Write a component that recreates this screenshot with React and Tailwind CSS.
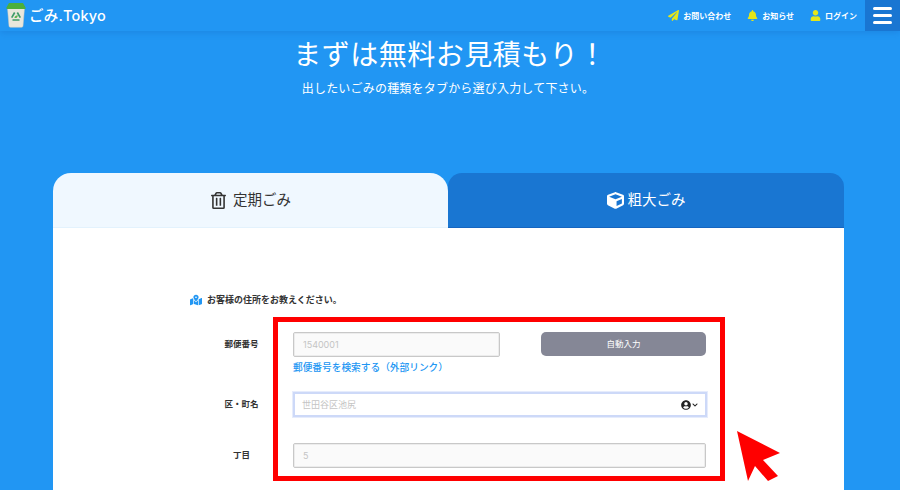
import React from 'react'
import { FaPaperPlane, FaBell, FaUser, FaRegTrashAlt, FaCube, FaMapMarkedAlt, FaUserCircle, FaChevronDown } from 'react-icons/fa'

const font = "font-['Inter','Noto_Sans_CJK_JP',sans-serif]"

function Logo() {
  return <svg width="20" height="25" viewBox="0 0 20 25" className="shrink-0">
    <path d="M1.500 5h17l-1.500 18a1.500 1.500 0 0 1-1.500 1.300H4.500A1.500 1.500 0 0 1 3 23z" fill="#e9e7dc" stroke="#cfcdc0" strokeWidth=".5"/>
    <path d="M3 0h14l2.500 4.500v1.500H.5V4.500z" fill="#4caf3c"/>
    <path d="M8.700 9.500l-3 5.200M11.300 9.500l3 5.200M6.500 17h7" fill="none" stroke="#3f9b6a" strokeWidth="1.700"/>
    <path d="M8.500 15c0-2 1.500-2.800 3.200-2.800 0 2-1 3.300-3.200 2.800z" fill="#59b34a"/>
  </svg>
}

function NavItem({icon, children}) {
  return <a className="flex items-center gap-[4px] text-[8px] font-bold text-white">
    <span className="text-[11px] text-[#e5e619]">{icon}</span>
    {children}
  </a>
}

function Header() {
  return <header className="flex h-[31px] items-center justify-between bg-[#2196f3] shadow-[0_2px_6px_rgba(25,118,210,.45)]">
    <div className="flex items-center gap-[3px] pl-[6px]">
      <Logo />
      <span className="text-[14.500px] font-medium tracking-[0.2px] text-white">ごみ.Tokyo</span>
    </div>
    <div className="flex h-full items-center">
      <NavItem icon={<FaPaperPlane />}>お問い合わせ</NavItem>
      <span className="ml-[16px]"><NavItem icon={<FaBell />}>お知らせ</NavItem></span>
      <span className="ml-[16px]"><NavItem icon={<FaUser />}>ログイン</NavItem></span>
      <button className="ml-[8px] flex h-full w-[35px] flex-col items-center justify-center gap-[4px] bg-[#1976d2]">
        <span className="h-[3px] w-[19px] rounded-sm bg-white"></span>
        <span className="h-[3px] w-[19px] rounded-sm bg-white"></span>
        <span className="h-[3px] w-[19px] rounded-sm bg-white"></span>
      </button>
    </div>
  </header>
}

function Row({label, className, children}) {
  return <div className={`flex ${className}`}>
    <label className="flex h-[25px] w-[103px] shrink-0 items-center justify-center text-[8.500px] font-bold text-[#333]">{label}</label>
    {children}
  </div>
}

export default function App() {
  return <div className={`relative h-[490px] w-[900px] overflow-hidden bg-[#2196f3] ${font}`}>
    <Header />
    <div className="pt-[5px] text-center text-white">
      <h1 className="text-[28px] leading-[38px] font-normal tracking-[0.5px]">まずは無料お見積もり！</h1>
      <p className="mt-[6px] pr-[4px] text-[12px] leading-[18px] tracking-[0.2px]">出したいごみの種類をタブから選び入力して下さい。</p>
    </div>
    <div className="mx-[53px] mt-[75px] w-[791px]">
      <div className="flex h-[55px]">
        <div className="flex w-[395px] items-center justify-center gap-[6px] rounded-t-[18px] border-b border-[#e3f2fd] bg-[#f0f8ff] text-[14.500px] text-[#333]">
          <FaRegTrashAlt className="text-[17px]" />定期ごみ
        </div>
        <div className="flex w-[396px] items-center justify-center gap-[4px] rounded-t-[14px] border-b border-[#1565c0] bg-[#1976d2] text-[14.500px] text-white">
          <FaCube className="text-[17px]" />粗大ごみ
        </div>
      </div>
      <div className="h-[300px] bg-white pt-[64px] pl-[137px]">
        <div className="flex h-[15px] items-center gap-[5px] text-[9px] font-bold text-[#333]">
          <FaMapMarkedAlt className="text-[12px] text-[#2196f3]" />お客様の住所をお教えください。
        </div>
        <Row label="郵便番号" className="mt-[25px]">
          <div>
            <div className="flex">
              <input readOnly placeholder="1540001" className="h-[25px] w-[207px] rounded-[2px] border border-[#c8c8c8] bg-[#fafafa] px-[9px] text-[9px] shadow-[inset_0_0_0_1px_#ececec] placeholder:text-[#c4c4c4]" />
              <button className="ml-[41px] h-[24px] w-[165px] rounded-[5px] bg-[#858796] text-[8.500px] text-white">自動入力</button>
            </div>
            <a className="mt-[3px] block text-[9.700px] leading-[16px] font-medium text-[#2196f3]">郵便番号を検索する（外部リンク）</a>
          </div>
        </Row>
        <Row label="区・町名" className="mt-[16px]">
          <div className="flex h-[25px] w-[414px] items-center justify-between border-2 border-[#cdd9f8] px-[7px] text-[9px] text-[#c4c4c4] shadow-[0_0_0_1px_#e6ecfc]">
            世田谷区池尻
            <span className="flex items-center gap-[1px] text-[#222]">
              <FaUserCircle className="text-[10px]" />
              <FaChevronDown className="text-[6px]" />
            </span>
          </div>
        </Row>
        <Row label="丁目" className="mt-[26px]">
          <input readOnly placeholder="5" className="h-[25px] w-[413px] rounded-[2px] border border-[#c8c8c8] bg-[#fafafa] px-[9px] text-[9px] shadow-[inset_0_0_0_1px_#ececec] placeholder:text-[#c4c4c4]" />
        </Row>
      </div>
    </div>
    <div className="absolute top-[317px] left-[273px] h-[164px] w-[452px] border-[5px] border-[#ff0000]"></div>
    <svg className="absolute top-[431px] left-[735px]" width="46" height="52" viewBox="0 0 46 52">
      <path d="M2 0L45 22 28 29 43 45 33 50 20 35 13 50z" fill="#ff0000" />
    </svg>
  </div>
}
